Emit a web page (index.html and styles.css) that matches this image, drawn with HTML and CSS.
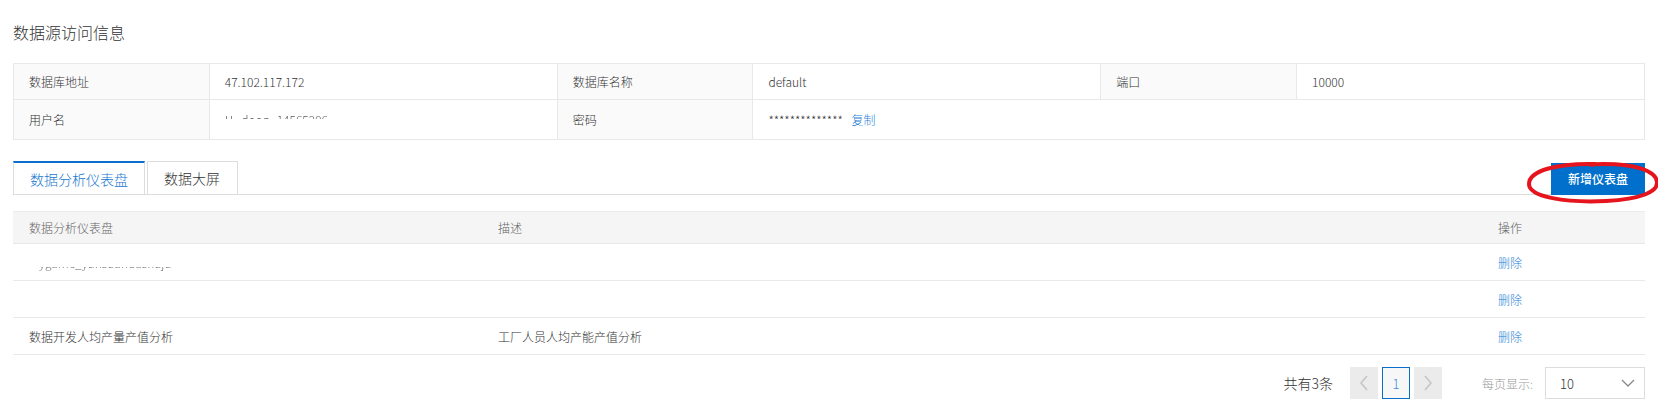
FILE: index.html
```html
<!DOCTYPE html>
<html lang="zh-CN">

<head>
    <meta charset="UTF-8">
    <meta name="viewport" content="width=device-width, initial-scale=1.0">
    <title>数据源访问信息</title>
    <link rel="stylesheet" href="styles.css">
</head>

<body>
    <h3 class="page-title">数据源访问信息</h3>

    <!-- 数据源信息 -->
    <table class="info-table">
        <colgroup>
            <col class="col-label">
            <col class="col-value">
            <col class="col-label">
            <col class="col-value">
            <col class="col-label">
            <col class="col-value">
        </colgroup>
        <tr class="row-first">
            <td class="info-label">数据库地址</td>
            <td>47.102.117.172</td>
            <td class="info-label">数据库名称</td>
            <td>default</td>
            <td class="info-label">端口</td>
            <td>10000</td>
        </tr>
        <tr class="row-second">
            <td class="info-label">用户名</td>
            <td><span class="mask-top">H&nbsp;&nbsp;&nbsp;doop_14565296</span></td>
            <td class="info-label">密码</td>
            <td colspan="3">
                <span class="pwd">**************</span>
                <a href="javascript:;" class="link">复制</a>
            </td>
        </tr>
    </table>

    <!-- 标签页 -->
    <div class="tab-bar">
        <div class="tabs">
            <a href="javascript:;" class="tab active">数据分析仪表盘</a>
            <a href="javascript:;" class="tab">数据大屏</a>
        </div>
        <div class="btn-wrap">
            <a href="javascript:;" class="btn-primary">新增仪表盘</a>
            <svg class="mark" width="134" height="44" viewBox="0 0 134 44">
                <path d="M70 3 C 30 2, 3 10, 3 23 C 3 36, 40 42, 80 40 C 115 38, 132 31, 131 21 C 130 10, 110 3, 78 3 C 72 3, 68 3, 64 4"
                    fill="none" stroke="#e5141d" stroke-width="4" />
            </svg>
        </div>
    </div>

    <!-- 仪表盘列表 -->
    <table class="data-table">
        <thead>
            <tr>
                <th class="col-name">数据分析仪表盘</th>
                <th class="col-desc">描述</th>
                <th class="col-op">操作</th>
            </tr>
        </thead>
        <tbody>
            <tr>
                <td><span class="mask-mid">ygame_yunsuandashuju</span></td>
                <td></td>
                <td><a href="javascript:;" class="link">删除</a></td>
            </tr>
            <tr>
                <td></td>
                <td></td>
                <td><a href="javascript:;" class="link">删除</a></td>
            </tr>
            <tr>
                <td>数据开发人均产量产值分析</td>
                <td>工厂人员人均产能产值分析</td>
                <td><a href="javascript:;" class="link">删除</a></td>
            </tr>
        </tbody>
    </table>

    <!-- 分页 -->
    <div class="pager">
        <span class="total">共有3条</span>
        <div class="pages">
            <a href="javascript:;" class="page-btn disabled">
                <svg width="10" height="16" viewBox="0 0 10 16"><path d="M8 1 L2 8 L8 15" fill="none" stroke="#c4c4c4" stroke-width="1.5" /></svg>
            </a>
            <a href="javascript:;" class="page-btn current">1</a>
            <a href="javascript:;" class="page-btn disabled">
                <svg width="10" height="16" viewBox="0 0 10 16"><path d="M2 1 L8 8 L2 15" fill="none" stroke="#c4c4c4" stroke-width="1.5" /></svg>
            </a>
        </div>
        <span class="page-size-label">每页显示:</span>
        <div class="select">
            <span>10</span>
            <svg width="14" height="8" viewBox="0 0 14 8"><path d="M1 1 L7 7 L13 1" fill="none" stroke="#888" stroke-width="1.3" /></svg>
        </div>
    </div>
</body>

</html>
```

FILE: styles.css
```css
body {
    margin: 0;
    padding: 0 13px;
    font-family: "Noto Sans CJK SC", "Noto Sans", sans-serif;
    font-size: 12px;
    font-weight: 300;
    color: #333;
    background: #fff;
}

a {
    text-decoration: none;
}

.link {
    color: #1f7fd6;
}

.page-title {
    margin: 0;
    padding-top: 20px;
    height: 24px;
    line-height: 24px;
    font-size: 16px;
    font-weight: 300;
    color: #333;
}

/* 数据源信息 */
.info-table {
    width: 100%;
    margin-top: 19px;
    border-collapse: collapse;
    border: 1px solid #e8e8e8;
    table-layout: fixed;
}

.col-label {
    width: 12%;
}

.col-value {
    width: 21.33%;
}

.info-table td {
    border: 1px solid #e8e8e8;
    padding: 0 0 0 15px;
    white-space: nowrap;
}

.row-first td {
    height: 35px;
}

.row-second td {
    height: 39px;
}

.info-label {
    background: #fafafa;
}

.pwd {
    margin-right: 6px;
}

/* 打码的文字，只露出一部分笔画 */
.mask-top {
    color: transparent;
    background: linear-gradient(#555 48%, transparent 48%);
    -webkit-background-clip: text;
    background-clip: text;
}

.mask-mid {
    padding-left: 10px;
    color: transparent;
    background: linear-gradient(#666 24%, transparent 24%, transparent 78%, #666 78%);
    -webkit-background-clip: text;
    background-clip: text;
}

/* 标签页 */
.tab-bar {
    display: flex;
    justify-content: space-between;
    align-items: flex-end;
    margin-top: 21px;
    border-bottom: 1px solid #ddd;
}

.tabs {
    display: flex;
    gap: 2px;
}

.tab {
    display: block;
    height: 32px;
    line-height: 32px;
    padding: 0 16px;
    font-size: 14px;
    color: #333;
    border: 1px solid #ddd;
    border-bottom: none;
}

.tab.active {
    color: #1777d1;
    border-top: 2px solid #0a6fcb;
    height: 31px;
    line-height: 33px;
}

.tab + .tab {
    width: 57px;
}

.btn-wrap {
    position: relative;
    margin-bottom: -1px;
}

.btn-primary {
    display: block;
    width: 94px;
    height: 32px;
    line-height: 32px;
    text-align: center;
    background: #0070cc;
    color: #fff;
    font-size: 12px;
    font-weight: 500;
}

.mark {
    position: absolute;
    left: -25px;
    top: -2px;
}

/* 仪表盘列表 */
.data-table {
    width: 100%;
    margin-top: 16px;
    border-collapse: collapse;
    table-layout: fixed;
}

.data-table th {
    height: 31px;
    padding: 0 0 0 16px;
    background: #f5f5f5;
    border-top: 1px solid #ececec;
    border-bottom: 1px solid #e8e8e8;
    font-weight: 300;
    text-align: left;
    color: #666;
}

.data-table td {
    height: 36px;
    padding: 0 0 0 16px;
    border-bottom: 1px solid #e8e8e8;
    white-space: nowrap;
}

.col-name {
    width: 453px;
}

.col-desc {
    width: 984px;
}

/* 分页 */
.pager {
    display: flex;
    justify-content: flex-end;
    align-items: center;
    margin-top: 12px;
    height: 32px;
}

.total {
    font-size: 14px;
    color: #333;
    margin-right: 17px;
}

.pages {
    display: flex;
    gap: 4px;
}

.page-btn {
    display: flex;
    align-items: center;
    justify-content: center;
    width: 28px;
    height: 32px;
    box-sizing: border-box;
    background: #ebebeb;
    font-size: 13px;
}

.page-btn.current {
    background: #f7f7f7;
    border: 1px solid #0a6fcb;
    color: #3a8ee0;
}

.page-size-label {
    margin-left: 40px;
    margin-right: 12px;
    color: #999;
}

.select {
    display: flex;
    justify-content: space-between;
    align-items: center;
    width: 100px;
    height: 32px;
    box-sizing: border-box;
    padding: 0 9px 0 14px;
    border: 1px solid #ddd;
    font-size: 13px;
}
```
